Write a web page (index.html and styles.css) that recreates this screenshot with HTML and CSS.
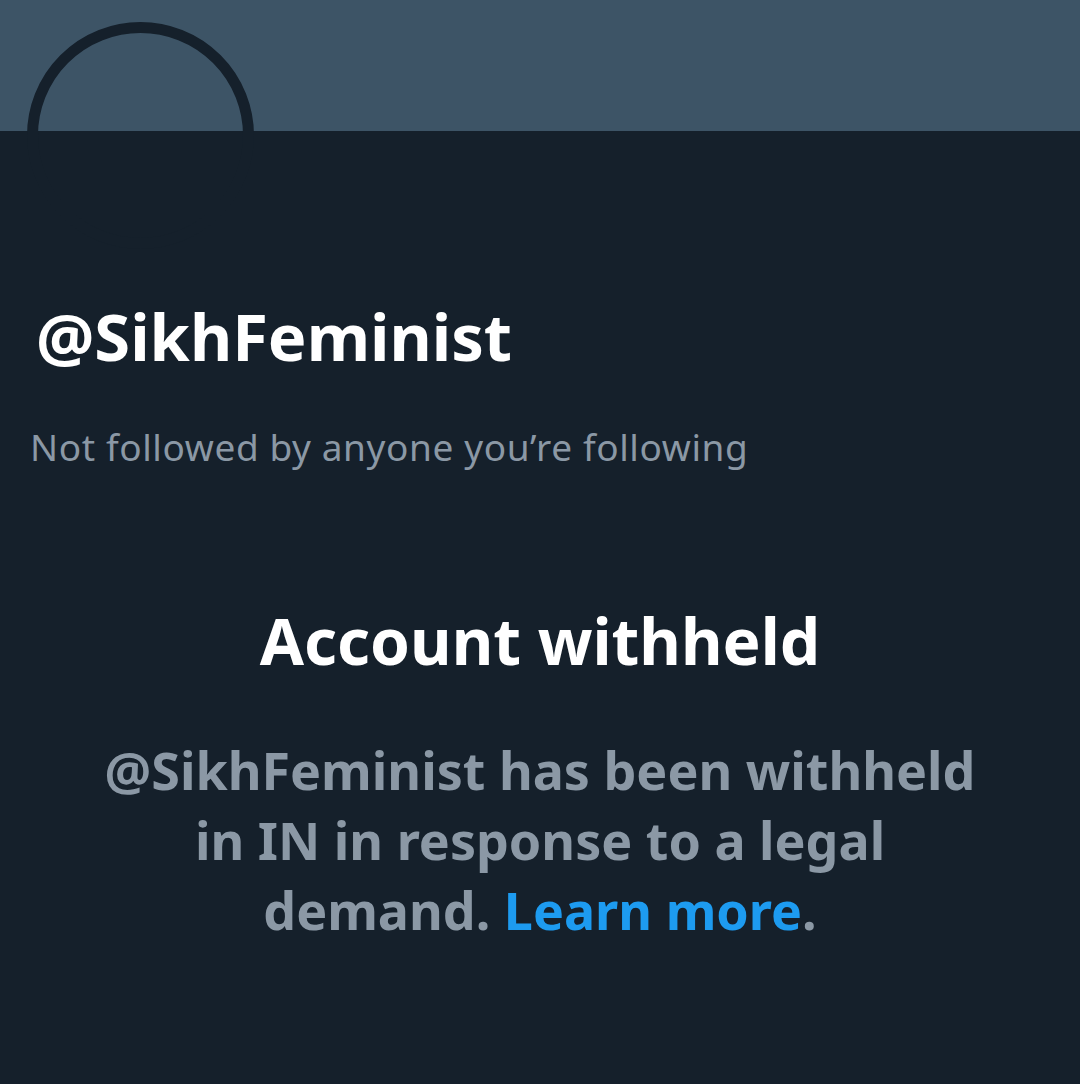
FILE: index.html
```html
<!DOCTYPE html>
<html lang="en">
<head>
  <meta charset="UTF-8">
  <meta name="viewport" content="width=device-width, initial-scale=1.0">
  <title>@SikhFeminist</title>
  <link rel="stylesheet" href="styles.css">
</head>
<body>
  <div class="banner">
    <!-- avatar ring sits over the bottom edge of the banner -->
    <div class="avatar"></div>
  </div>

  <div class="profile">
    <h1 class="handle">@SikhFeminist</h1>
    <p class="followers">Not followed by anyone you’re following</p>
  </div>

  <div class="withheld">
    <h2 class="withheld-title">Account withheld</h2>
    <p class="withheld-text">@SikhFeminist has been withheld in IN in response to a legal demand. <a href="#" class="learn-more">Learn more</a>.</p>
  </div>
</body>
</html>
```

FILE: styles.css
```css
body {
  margin: 0;
  background-color: #15202b;
  font-family: 'Noto Sans', 'Open Sans', sans-serif;
  color: #ffffff;
  height: 1084px;
  overflow: hidden;
}
.banner {
  position: relative;
  height: 131px;
  background-color: #3d5466;
}
.avatar {
  position: absolute;
  left: 27px;
  top: 22px;
  width: 227px;
  height: 227px;
  box-sizing: border-box;
  border: 11px solid #15202b;
  border-radius: 50%;
}
.profile {
  padding: 0 30px;
}
.handle {
  margin: 166px 0 0 6px;
  font-size: 65px;
  line-height: 78px;
  font-weight: 700;
}
.followers {
  margin: 50px 0 0;
  font-size: 37px;
  line-height: 44px;
  letter-spacing: 0.6px;
  color: #8b98a5;
}
.withheld {
  text-align: center;
}
.withheld-title {
  margin: 132px 0 0;
  font-size: 64px;
  line-height: 80px;
  font-weight: 700;
}
.withheld-text {
  width: 880px;
  margin: 54px auto 0;
  font-size: 52px;
  line-height: 70px;
  font-weight: 700;
  color: #8b98a5;
}
.learn-more {
  color: #1d9bf0;
  text-decoration: none;
}
```
